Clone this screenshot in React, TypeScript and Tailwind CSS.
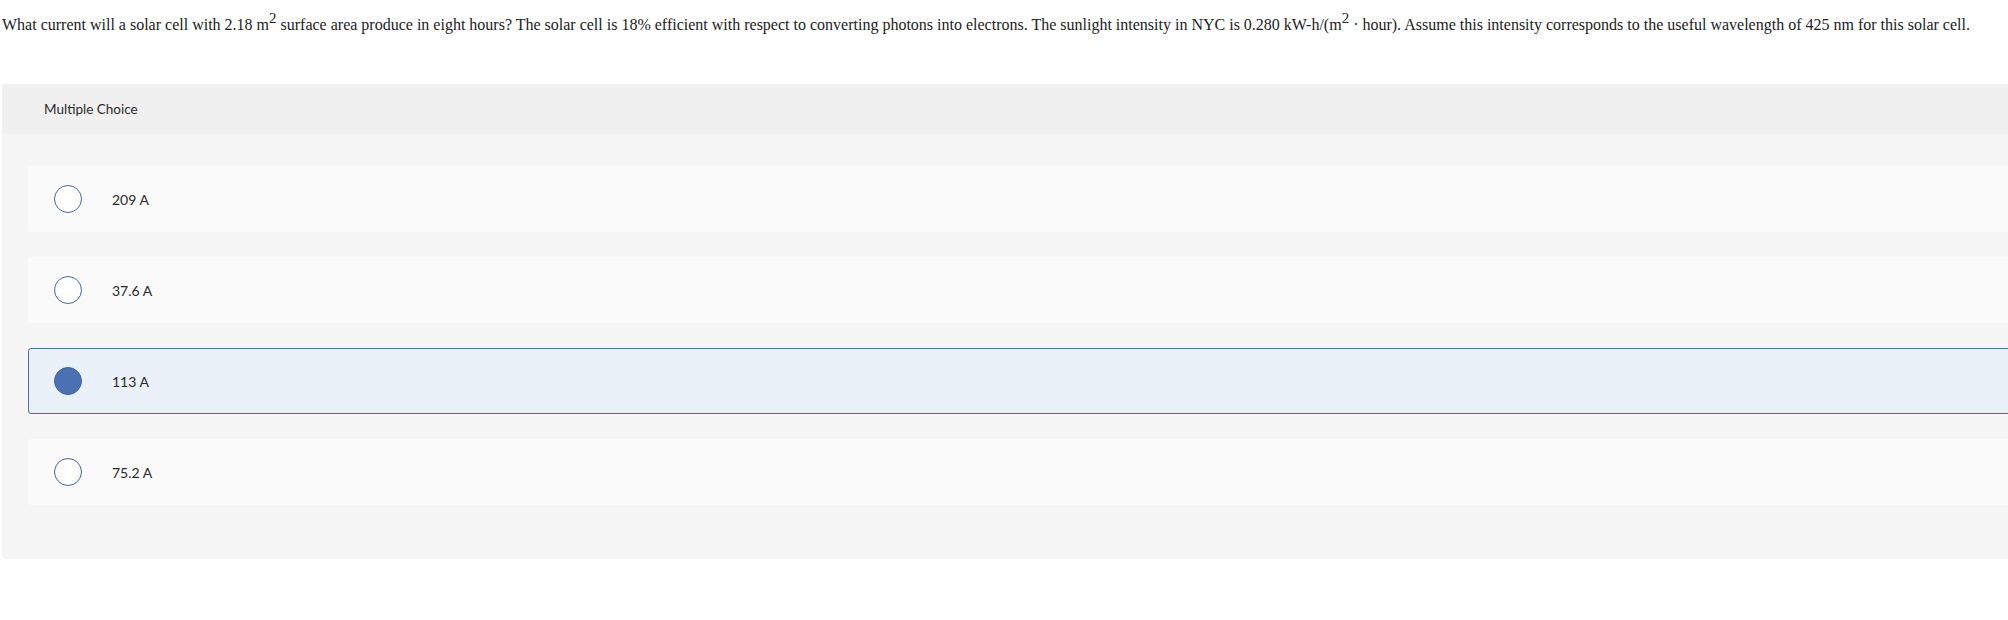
// Multiple choice question card

const options = [
    { label: '209 A', selected: false },
    { label: '37.6 A', selected: false },
    { label: '113 A', selected: true },
    { label: '75.2 A', selected: false },
];

function Radio({ checked }: { checked: boolean }) {
    return (
        <span
            className={
                checked
                    ? 'w-[28px] h-[28px] rounded-full border-[1.5px] border-[#3f64a3] bg-[#4b71b3] shrink-0'
                    : 'w-[28px] h-[28px] rounded-full border-[1.5px] border-[#47679a] bg-white shrink-0'
            }
        />
    );
}

export default function App() {
    return (
        <div className="w-[2008px] h-[620px] overflow-hidden bg-white">
            <p className="font-['Liberation_Serif',serif] text-[16px] leading-[20px] text-[#222] pl-[2px] pt-[15px] whitespace-nowrap">
                What current will a solar cell with 2.18 m
                <sup className="text-[15px] -top-[0.5em]">2</sup> surface area produce in eight hours? The solar cell is 18% efficient with respect to converting photons into electrons. The sunlight intensity in NYC is 0.280 kW-h/(m
                <sup className="text-[15px] -top-[0.5em]">2</sup> · hour). Assume this intensity corresponds to the useful wavelength of 425 nm for this solar cell.
            </p>

            <div className="ml-[2px] mt-[49px] w-[2100px] rounded-[3px] bg-[#f5f5f5] font-['Lato',sans-serif] text-[#2b2b2b]">
                <div className="h-[50px] flex items-center pl-[42px] bg-[#f0f0f0] rounded-t-[3px] text-[13.5px]">
                    Multiple Choice
                </div>
                <div className="flex flex-col gap-[25px] pl-[26px] pt-[32px] pb-[54px]">
                    {options.map((o) => (
                        <div
                            key={o.label}
                            className={
                                o.selected
                                    ? 'h-[66px] flex items-center gap-[30px] pl-[25px] rounded-[3px] border border-[#4a6fae] bg-[#eaf1f9]'
                                    : 'h-[66px] flex items-center gap-[30px] pl-[25px] rounded-[3px] border border-transparent bg-[#fafafa]'
                            }
                        >
                            <Radio checked={o.selected} />
                            <span className="text-[14px]">{o.label}</span>
                        </div>
                    ))}
                </div>
            </div>
        </div>
    );
}
